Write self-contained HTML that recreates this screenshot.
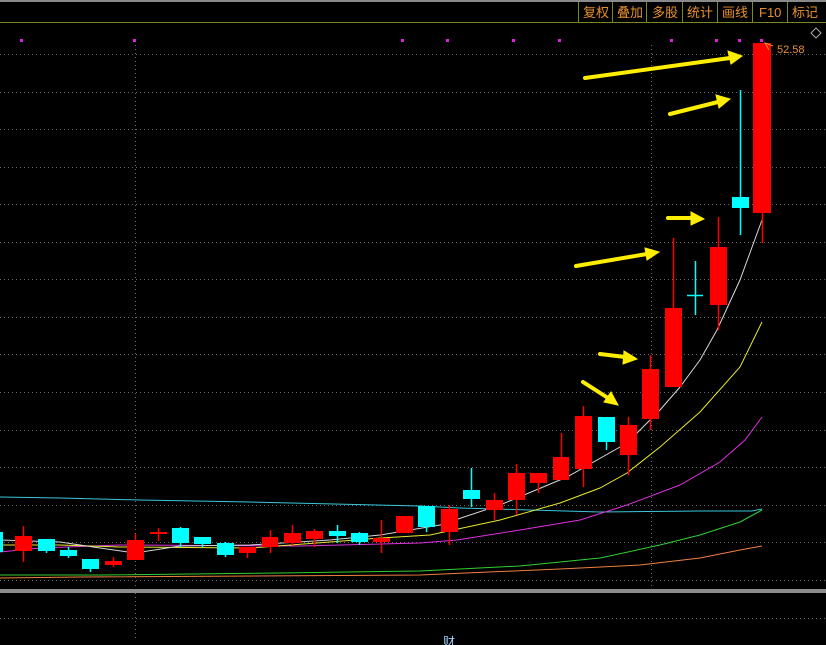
<!DOCTYPE html>
<html><head><meta charset="utf-8"><style>
html,body{margin:0;padding:0;background:#000;width:826px;height:645px;overflow:hidden}
svg{display:block}
.b{font-family:"Liberation Sans","Noto Sans CJK SC",sans-serif;font-size:13px;fill:#e8912c}
</style></head><body>
<svg width="826" height="645" viewBox="0 0 826 645" xmlns="http://www.w3.org/2000/svg">
<rect width="826" height="645" fill="#000"/>
<rect x="0" y="0" width="826" height="2" fill="#8a8a8a"/>
<line x1="0" y1="22.5" x2="826" y2="22.5" stroke="#7a8a20" stroke-width="1"/>
<g stroke="#7a8a20" stroke-width="1">
<line x1="578.5" y1="2" x2="578.5" y2="22"/><line x1="612.5" y1="2" x2="612.5" y2="22"/><line x1="646.5" y1="2" x2="646.5" y2="22"/><line x1="682.5" y1="2" x2="682.5" y2="22"/><line x1="717.5" y1="2" x2="717.5" y2="22"/><line x1="752.5" y1="2" x2="752.5" y2="22"/><line x1="787.5" y1="2" x2="787.5" y2="22"/>
</g>
<text class="b" x="583" y="17">复权</text><text class="b" x="617" y="17">叠加</text><text class="b" x="652" y="17">多股</text><text class="b" x="687" y="17">统计</text><text class="b" x="722" y="17">画线</text><text class="b" x="759" y="17">F10</text><text class="b" x="792" y="17">标记</text>
<path d="M816 28 L821 33 L816 38 L811 33 Z" fill="none" stroke="#aaa" stroke-width="1"/>
<g stroke="#6a6a6a" stroke-width="1" stroke-dasharray="1 3">
<line x1="0" y1="54.5" x2="826" y2="54.5"/><line x1="0" y1="92.5" x2="826" y2="92.5"/><line x1="0" y1="129.5" x2="826" y2="129.5"/><line x1="0" y1="167.5" x2="826" y2="167.5"/><line x1="0" y1="204.5" x2="826" y2="204.5"/><line x1="0" y1="242.5" x2="826" y2="242.5"/><line x1="0" y1="279.5" x2="826" y2="279.5"/><line x1="0" y1="317.5" x2="826" y2="317.5"/><line x1="0" y1="354.5" x2="826" y2="354.5"/><line x1="0" y1="392.5" x2="826" y2="392.5"/><line x1="0" y1="430.5" x2="826" y2="430.5"/><line x1="0" y1="467.5" x2="826" y2="467.5"/><line x1="0" y1="505.5" x2="826" y2="505.5"/><line x1="0" y1="542.5" x2="826" y2="542.5"/><line x1="0" y1="580.5" x2="826" y2="580.5"/><line x1="0" y1="618.5" x2="826" y2="618.5"/>
<line x1="135.5" y1="45" x2="135.5" y2="640"/><line x1="651.5" y1="45" x2="651.5" y2="588"/>
</g>
<rect x="0" y="589" width="826" height="4" fill="#8c8c8c"/>
<g fill="#e020e0"><rect x="20" y="39" width="3" height="3"/><rect x="133" y="39" width="3" height="3"/><rect x="401" y="39" width="3" height="3"/><rect x="446" y="39" width="3" height="3"/><rect x="512" y="39" width="3" height="3"/><rect x="558" y="39" width="3" height="3"/><rect x="670" y="39" width="3" height="3"/><rect x="715" y="39" width="3" height="3"/><rect x="738" y="39" width="3" height="3"/><rect x="760" y="39" width="3" height="3"/></g>
<!-- MA lines -->
<polyline fill="none" stroke="#38c8d8" stroke-width="1" points="0,497 60,498 140,500 250,502 420,506 460,508 600,512 700,511 752,511 762,509"/>
<polyline fill="none" stroke="#30d030" stroke-width="1" points="0,575 100,575 280,573 420,571 520,566 600,558 660,545 700,535 740,522 762,510"/>
<polyline fill="none" stroke="#f08040" stroke-width="1" points="0,578 80,577 420,575 560,569 640,565 700,558 740,550 762,546"/>
<polyline fill="none" stroke="#e030e0" stroke-width="1" points="0,552 40,548 120,545 300,546 420,543 457,540 520,530 580,520 627,505 680,485 720,462 745,440 762,417"/>
<polyline fill="none" stroke="#e8e830" stroke-width="1" points="0,545 60,545 120,547 250,548 330,542 380,538 430,535 500,520 560,503 600,488 627,473 660,447 700,412 740,367 762,322"/>
<polyline fill="none" stroke="#d8d8d8" stroke-width="1" points="0,540 60,542 100,548 135,553 180,546 250,545 330,540 380,535 440,525 500,505 567,477 627,443 660,410 680,387 700,360 717,330 740,280 762,220"/>
<!-- candles -->
<g stroke-width="1.5">
<!-- left -->
<line x1="23.5" y1="526" x2="23.5" y2="562" stroke="#ff0000"/><rect x="15" y="536" width="17" height="15" fill="#ff0000"/>
<line x1="46.5" y1="539" x2="46.5" y2="553" stroke="#00ffff"/><rect x="38" y="539" width="17" height="12" fill="#00ffff"/>
<rect x="0" y="532" width="3" height="20" fill="#00ffff"/>
<line x1="68.5" y1="547" x2="68.5" y2="558" stroke="#00ffff"/><rect x="60" y="550" width="17" height="6" fill="#00ffff"/>
<line x1="90.5" y1="559" x2="90.5" y2="572" stroke="#00ffff"/><rect x="82" y="559" width="17" height="10" fill="#00ffff"/>
<line x1="113.5" y1="557" x2="113.5" y2="567" stroke="#ff0000"/><rect x="105" y="561" width="17" height="4" fill="#ff0000"/>
<line x1="135.5" y1="534" x2="135.5" y2="560" stroke="#ff0000"/><rect x="127" y="540" width="17" height="20" fill="#ff0000"/>
<line x1="158.5" y1="528" x2="158.5" y2="541" stroke="#ff0000"/><rect x="150" y="532" width="17" height="2" fill="#ff0000"/>
<line x1="180.5" y1="527" x2="180.5" y2="547" stroke="#00ffff"/><rect x="172" y="528" width="17" height="15" fill="#00ffff"/>
<line x1="202.5" y1="537" x2="202.5" y2="547" stroke="#00ffff"/><rect x="194" y="537" width="17" height="7" fill="#00ffff"/>
<line x1="225.5" y1="542" x2="225.5" y2="557" stroke="#00ffff"/><rect x="217" y="543" width="17" height="12" fill="#00ffff"/>
<line x1="247.5" y1="547" x2="247.5" y2="558" stroke="#ff0000"/><rect x="239" y="547" width="17" height="6" fill="#ff0000"/>
<line x1="270.5" y1="530" x2="270.5" y2="553" stroke="#ff0000"/><rect x="262" y="537" width="16" height="10" fill="#ff0000"/>
<line x1="292.5" y1="525" x2="292.5" y2="545" stroke="#ff0000"/><rect x="284" y="533" width="17" height="10" fill="#ff0000"/>
<line x1="314.5" y1="529" x2="314.5" y2="547" stroke="#ff0000"/><rect x="306" y="531" width="17" height="8" fill="#ff0000"/>
<line x1="337.5" y1="525" x2="337.5" y2="543" stroke="#00ffff"/><rect x="329" y="531" width="17" height="5" fill="#00ffff"/>
<line x1="359.5" y1="532" x2="359.5" y2="545" stroke="#00ffff"/><rect x="351" y="533" width="17" height="9" fill="#00ffff"/>
<line x1="381.5" y1="520" x2="381.5" y2="553" stroke="#ff0000"/><rect x="373" y="538" width="17" height="4" fill="#ff0000"/>
<!-- right -->
<rect x="396" y="516" width="17" height="17" fill="#ff0000"/>
<line x1="426.5" y1="506" x2="426.5" y2="532" stroke="#00ffff"/><rect x="418" y="506" width="17" height="21" fill="#00ffff"/>
<line x1="449.5" y1="505" x2="449.5" y2="545" stroke="#ff0000"/><rect x="441" y="509" width="17" height="23" fill="#ff0000"/>
<line x1="471.5" y1="468" x2="471.5" y2="507" stroke="#00ffff"/><rect x="463" y="490" width="17" height="9" fill="#00ffff"/>
<line x1="494.5" y1="493" x2="494.5" y2="520" stroke="#ff0000"/><rect x="486" y="500" width="17" height="10" fill="#ff0000"/>
<line x1="516.5" y1="464" x2="516.5" y2="515" stroke="#ff0000"/><rect x="508" y="473" width="17" height="27" fill="#ff0000"/>
<line x1="538.5" y1="473" x2="538.5" y2="493" stroke="#ff0000"/><rect x="530" y="473" width="17" height="10" fill="#ff0000"/>
<line x1="561.5" y1="433" x2="561.5" y2="480" stroke="#ff0000"/><rect x="553" y="457" width="16" height="23" fill="#ff0000"/>
<line x1="583.5" y1="406" x2="583.5" y2="487" stroke="#ff0000"/><rect x="575" y="416" width="17" height="53" fill="#ff0000"/>
<line x1="606.5" y1="417" x2="606.5" y2="450" stroke="#00ffff"/><rect x="598" y="417" width="17" height="25" fill="#00ffff"/>
<line x1="628.5" y1="417" x2="628.5" y2="475" stroke="#ff0000"/><rect x="620" y="425" width="17" height="30" fill="#ff0000"/>
<line x1="650.5" y1="355" x2="650.5" y2="430" stroke="#ff0000"/><rect x="642" y="369" width="17" height="50" fill="#ff0000"/>
<line x1="673.5" y1="238" x2="673.5" y2="387" stroke="#ff0000"/><rect x="665" y="308" width="17" height="79" fill="#ff0000"/>
<line x1="695.5" y1="261" x2="695.5" y2="315" stroke="#00ffff"/><line x1="687" y1="295.5" x2="703" y2="295.5" stroke="#00ffff"/>
<line x1="718.5" y1="217" x2="718.5" y2="330" stroke="#ff0000"/><rect x="710" y="247" width="17" height="58" fill="#ff0000"/>
<line x1="740.5" y1="90" x2="740.5" y2="235" stroke="#00ffff"/><rect x="732" y="197" width="17" height="11" fill="#00ffff"/>
<line x1="762.5" y1="200" x2="762.5" y2="243" stroke="#ff0000"/><rect x="753" y="43" width="18" height="170" fill="#ff0000"/>
</g>
<!-- label -->
<path d="M773 46 L765 43 L769 50" fill="none" stroke="#e8912c" stroke-width="1"/>
<text x="777" y="53" font-family="Liberation Sans, sans-serif" font-size="11" fill="#e8912c">52.58</text>
<!-- arrows -->
<g stroke="#ffee00" stroke-width="4" stroke-linecap="round" fill="#ffee00">
<line x1="585" y1="78" x2="730" y2="58"/><path d="M742 56 L728 51 L731 64 Z" stroke-width="1"/>
<line x1="670" y1="114" x2="718" y2="102"/><path d="M730 99 L716 95 L719 108 Z" stroke-width="1"/>
<line x1="668" y1="218" x2="693" y2="218"/><path d="M704 219 L691 212 L691 225 Z" stroke-width="1"/>
<line x1="576" y1="266" x2="647" y2="254"/><path d="M659 252 L645 248 L647 260 Z" stroke-width="1"/>
<line x1="600" y1="354" x2="625" y2="357"/><path d="M637 359 L624 351 L623 364 Z" stroke-width="1"/>
<line x1="583" y1="382" x2="608" y2="398"/><path d="M618 405 L611 392 L604 402 Z" stroke-width="1"/>
</g>
<text x="443" y="646" font-family="Liberation Sans, Noto Sans CJK SC, sans-serif" font-size="12" fill="#a0d0ff">财</text>
</svg>
</body></html>
